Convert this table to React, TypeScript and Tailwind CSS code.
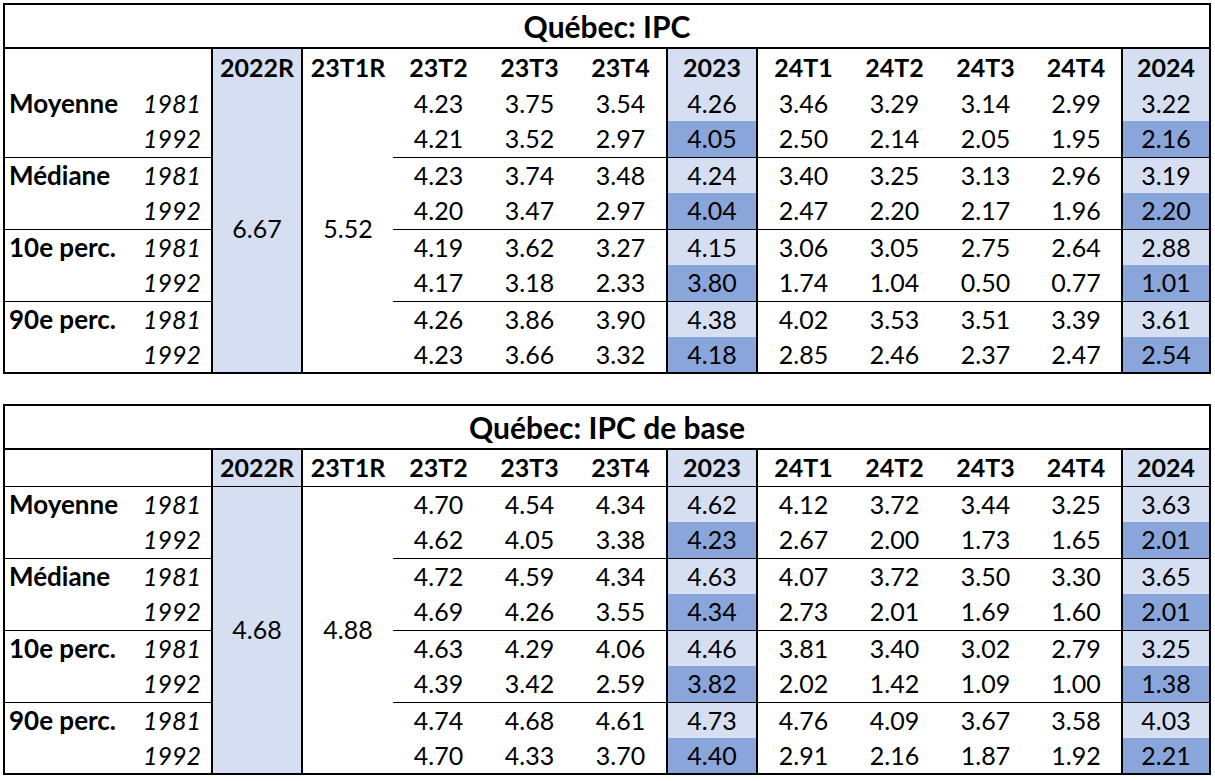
type Group = { label: string; rows: [string, string[]][] };

type TableData = {
  title: string;
  r22: string;
  t1: string;
  headerLine: boolean;
  groups: Group[];
};

const tables: TableData[] = [
  {
    title: "Québec: IPC",
    r22: "6.67",
    t1: "5.52",
    headerLine: false,
    groups: [
      {
        label: "Moyenne",
        rows: [
          ["1981", ["4.23", "3.75", "3.54", "4.26", "3.46", "3.29", "3.14", "2.99", "3.22"]],
          ["1992", ["4.21", "3.52", "2.97", "4.05", "2.50", "2.14", "2.05", "1.95", "2.16"]],
        ],
      },
      {
        label: "Médiane",
        rows: [
          ["1981", ["4.23", "3.74", "3.48", "4.24", "3.40", "3.25", "3.13", "2.96", "3.19"]],
          ["1992", ["4.20", "3.47", "2.97", "4.04", "2.47", "2.20", "2.17", "1.96", "2.20"]],
        ],
      },
      {
        label: "10e perc.",
        rows: [
          ["1981", ["4.19", "3.62", "3.27", "4.15", "3.06", "3.05", "2.75", "2.64", "2.88"]],
          ["1992", ["4.17", "3.18", "2.33", "3.80", "1.74", "1.04", "0.50", "0.77", "1.01"]],
        ],
      },
      {
        label: "90e perc.",
        rows: [
          ["1981", ["4.26", "3.86", "3.90", "4.38", "4.02", "3.53", "3.51", "3.39", "3.61"]],
          ["1992", ["4.23", "3.66", "3.32", "4.18", "2.85", "2.46", "2.37", "2.47", "2.54"]],
        ],
      },
    ],
  },
  {
    title: "Québec: IPC de base",
    r22: "4.68",
    t1: "4.88",
    headerLine: true,
    groups: [
      {
        label: "Moyenne",
        rows: [
          ["1981", ["4.70", "4.54", "4.34", "4.62", "4.12", "3.72", "3.44", "3.25", "3.63"]],
          ["1992", ["4.62", "4.05", "3.38", "4.23", "2.67", "2.00", "1.73", "1.65", "2.01"]],
        ],
      },
      {
        label: "Médiane",
        rows: [
          ["1981", ["4.72", "4.59", "4.34", "4.63", "4.07", "3.72", "3.50", "3.30", "3.65"]],
          ["1992", ["4.69", "4.26", "3.55", "4.34", "2.73", "2.01", "1.69", "1.60", "2.01"]],
        ],
      },
      {
        label: "10e perc.",
        rows: [
          ["1981", ["4.63", "4.29", "4.06", "4.46", "3.81", "3.40", "3.02", "2.79", "3.25"]],
          ["1992", ["4.39", "3.42", "2.59", "3.82", "2.02", "1.42", "1.09", "1.00", "1.38"]],
        ],
      },
      {
        label: "90e perc.",
        rows: [
          ["1981", ["4.74", "4.68", "4.61", "4.73", "4.76", "4.09", "3.67", "3.58", "4.03"]],
          ["1992", ["4.70", "4.33", "3.70", "4.40", "2.91", "2.16", "1.87", "1.92", "2.21"]],
        ],
      },
    ],
  },
];

// column widths in px, left to right
const widths = [137, 71, 90, 91, 91, 91, 92, 90, 92, 91, 91, 91, 88];
const light = "bg-[#D6DEF1]";
const dark = "bg-[#8AA5DA]";

function QuebecTable({ data }: { data: TableData }) {
  const hb = data.headerLine ? "border-b border-black" : "";
  return (
    <table className="table-fixed border-collapse border-2 border-black w-[1207px] text-[25px] text-black">
      <colgroup>
        {widths.map((w, i) => (
          <col key={i} style={{ width: w }} />
        ))}
      </colgroup>
      <tbody>
        <tr className="h-[44px]">
          <td colSpan={13} className="border-b-2 border-black text-center font-bold text-[30px] leading-none">
            {data.title}
          </td>
        </tr>
        <tr className="h-[37px] font-bold leading-none">
          <td colSpan={2} className={hb}></td>
          <td className={`${light} ${hb} border-l-2 border-r-2 border-black text-center`}>2022R</td>
          <td className={`${hb} text-center`}>23T1R</td>
          <td className={`${hb} text-center`}>23T2</td>
          <td className={`${hb} text-center`}>23T3</td>
          <td className={`${hb} text-center`}>23T4</td>
          <td className={`${light} ${hb} border-l-2 border-r-2 border-black text-center`}>2023</td>
          <td className={`${hb} text-center`}>24T1</td>
          <td className={`${hb} text-center`}>24T2</td>
          <td className={`${hb} text-center`}>24T3</td>
          <td className={`${hb} text-center`}>24T4</td>
          <td className={`${light} ${hb} border-l-2 border-black text-center`}>2024</td>
        </tr>
        {data.groups.map((g, gi) =>
          g.rows.map(([year, vals], yi) => {
            const top = gi > 0 && yi === 0 ? "border-t border-black" : "";
            const shade = yi === 0 ? light : dark;
            return (
              <tr key={g.label + year} className="h-[36px] leading-none">
                <td className={`${top} pl-[4px] font-bold text-[26px] whitespace-nowrap`}>
                  {yi === 0 ? g.label : ""}
                </td>
                <td className={`${top} pr-[10px] text-right italic`}>{year}</td>
                {gi === 0 && yi === 0 && (
                  <>
                    <td rowSpan={8} className={`${light} border-l-2 border-r-2 border-black text-center`}>
                      {data.r22}
                    </td>
                    <td rowSpan={8} className="text-center">
                      {data.t1}
                    </td>
                  </>
                )}
                {vals.map((v, vi) => {
                  if (vi === 3) {
                    return (
                      <td key={vi} className={`${top} ${shade} border-l-2 border-r-2 border-black text-center`}>
                        {v}
                      </td>
                    );
                  }
                  if (vi === 8) {
                    return (
                      <td key={vi} className={`${top} ${shade} border-l-2 border-black text-center`}>
                        {v}
                      </td>
                    );
                  }
                  return (
                    <td key={vi} className={`${top} text-center`}>
                      {v}
                    </td>
                  );
                })}
              </tr>
            );
          })
        )}
      </tbody>
    </table>
  );
}

export default function App() {
  return (
    <div className="w-[1215px] h-[781px] bg-white pt-[3px] pl-[3px] font-['Lato',sans-serif]">
      <QuebecTable data={tables[0]} />
      <div className="h-[30px]" />
      <QuebecTable data={tables[1]} />
    </div>
  );
}
